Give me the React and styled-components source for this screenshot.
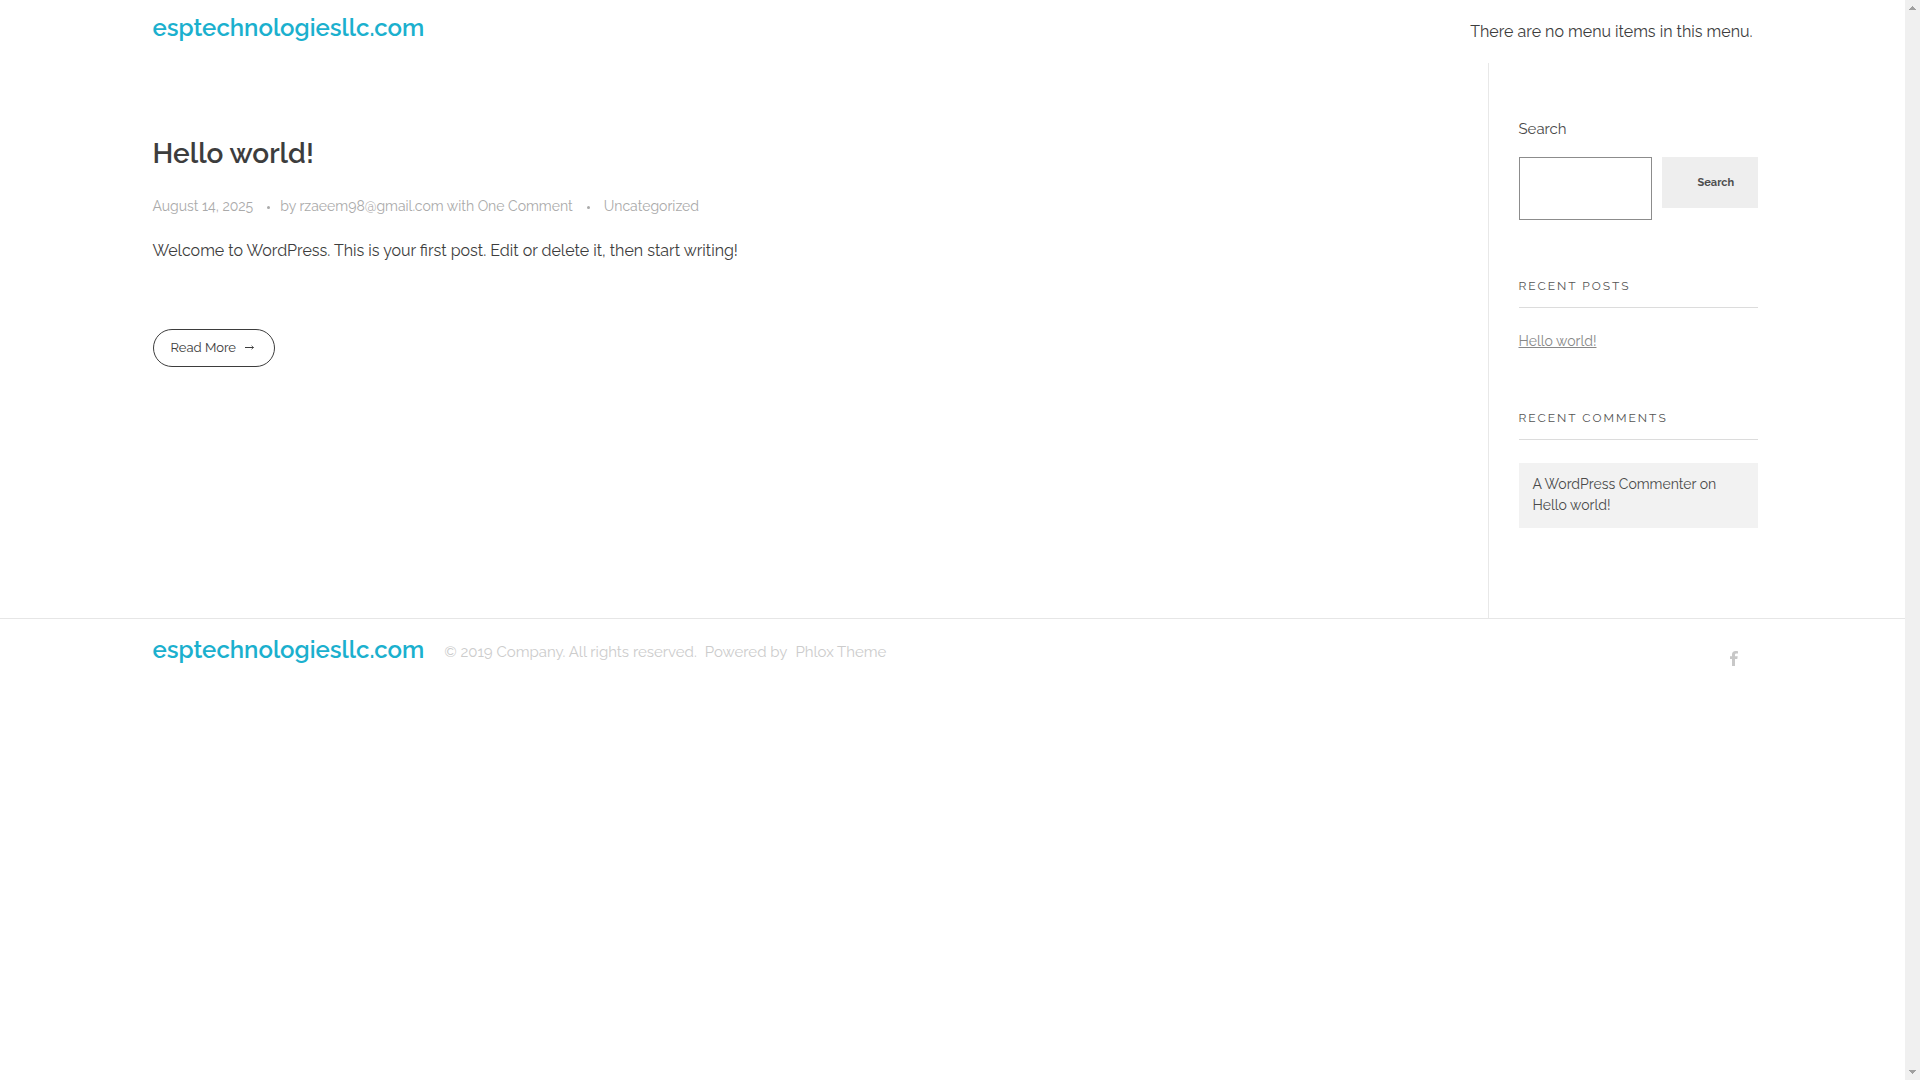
import React from "react";
import styled, { createGlobalStyle } from "styled-components";

const GlobalStyle = createGlobalStyle`
  *, *::before, *::after { box-sizing: border-box; }
  body {
    margin: 0;
    background: #fff;
    color: #3d3d3d;
    font-family: Raleway, Lato, "Open Sans", sans-serif;
    font-size: 16px;
    line-height: 24px;
  }
  a { color: inherit; text-decoration: none; }
  h1, h2, h3, p, ul { margin: 0; padding: 0; font-weight: 400; }
`;

const Window = styled.div`
  display: flex;
  align-items: flex-start;
`;

const Page = styled.div`
  flex: 1;
  min-width: 0;
`;

const Scrollbar = styled.div`
  position: sticky;
  top: 0;
  flex: none;
  display: flex;
  flex-direction: column;
  justify-content: space-between;
  align-items: center;
  width: 15px;
  height: 100vh;
  padding: 6px 0 6px;
  background: #f0f0f0;
`;

const Arrow = styled.svg`
  display: block;
  width: 7px;
  height: 4px;
  fill: #a0a0a0;
`;

const Container = styled.div`
  display: flex;
  align-items: ${(p) => (p.$stretch ? "stretch" : "flex-start")};
  max-width: 1600px;
  margin: 0 auto;
`;

const Header = styled.header`
  height: 63px;
  padding-top: 12px;
`;

const SiteTitle = styled.a`
  color: #1bb0ce;
  font-size: 24px;
  line-height: 32px;
  font-weight: 600;
`;

const MenuNote = styled.p`
  margin-left: auto;
  padding-top: 8px;
`;

const Main = styled.main`
  flex: 1;
  padding-top: 71px;
`;

const PostTitle = styled.h1`
  font-size: 28px;
  line-height: 40px;
  font-weight: 600;
`;

const Meta = styled.div`
  display: flex;
  align-items: center;
  margin-top: 21px;
  color: #aaa;
  font-size: 14px;
  line-height: 22px;
`;

const Dot = styled.span`
  width: 3px;
  height: 3px;
  margin: 3px ${(p) => (p.$wide ? 14 : 10)}px 0 14px;
  border-radius: 50%;
  background: #aaa;
`;

const Excerpt = styled.p`
  margin-top: 22px;
`;

const ReadMore = styled.a`
  display: inline-flex;
  align-items: center;
  gap: 8px;
  height: 38px;
  margin-top: 66px;
  padding: 0 20px 0 17px;
  border: 1px solid #3d3d3d;
  border-radius: 19px;
  font-size: 13px;
  line-height: 20px;
`;

const Sidebar = styled.aside`
  flex: none;
  width: 270px;
  margin-right: -5px;
  padding: 54px 0 90px 30px;
  border-left: 1px solid #e8e8e8;
`;

const SearchForm = styled.form`
  display: grid;
  grid-template-columns: 1fr 96px;
  align-items: start;
  column-gap: 10px;
  row-gap: 16px;
  margin-bottom: 56px;
`;

const SearchLabel = styled.label`
  grid-column: 1 / -1;
  color: #4a4a4a;
  font-size: 15px;
`;

const SearchInput = styled.input`
  width: 100%;
  min-width: 0;
  height: 63px;
  padding: 8px;
  border: 1px solid #8c8c8c;
  border-radius: 0;
  background: #fff;
  font: inherit;
`;

const SearchButton = styled.button`
  height: 51px;
  padding: 0 24px 0 36px;
  border: 0;
  background: #eee;
  color: #4d4d4d;
  font-family: inherit;
  font-size: 11px;
  font-weight: 700;
`;

const Widget = styled.section`
  & + & { margin-top: 56px; }
`;

const WidgetTitle = styled.h2`
  padding-bottom: 11px;
  margin-bottom: 23px;
  border-bottom: 1px solid #dcdcdc;
  color: #555;
  font-size: 12px;
  line-height: 20px;
  letter-spacing: 2px;
  text-transform: uppercase;
`;

const PostLink = styled.a`
  display: block;
  color: #888;
  font-size: 14px;
  line-height: 21px;
  text-decoration: underline;
`;

const Comment = styled.p`
  padding: 11px 14px 12px;
  background: #f2f2f2;
  color: #4a4a4a;
  font-size: 14px;
  line-height: 21px;
`;

const Footer = styled.footer`
  padding: 15px 0;
  border-top: 1px solid #e6e6e6;
`;

const Copyright = styled.p`
  display: flex;
  gap: 8px;
  flex: 1;
  margin-left: 20px;
  padding-top: 6px;
  color: #ccc;
  font-size: 15px;
`;

const Social = styled.a`
  padding: 17px 15px 0 0;
`;

const FacebookMark = styled.svg`
  display: block;
  width: 8px;
  height: 15px;
  fill: #c8c8c8;
`;

export default function App() {
  return (
    <>
      <GlobalStyle />
      <Window>
        <Page>
          <Header>
            <Container>
              <SiteTitle href="#">esptechnologiesllc.com</SiteTitle>
              <MenuNote>There are no menu items in this menu.</MenuNote>
            </Container>
          </Header>
          <Container $stretch>
            <Main>
              <article>
                <PostTitle><a href="#">Hello world!</a></PostTitle>
                <Meta>
                  <a href="#">August 14, 2025</a>
                  <Dot />
                  <span>by <a href="#">rzaeem98@gmail.com</a> with <a href="#">One Comment</a></span>
                  <Dot $wide />
                  <a href="#">Uncategorized</a>
                </Meta>
                <Excerpt>Welcome to WordPress. This is your first post. Edit or delete it, then start writing!</Excerpt>
                <ReadMore href="#">
                  <span>Read More</span>
                  <svg width="10" height="7" viewBox="0 0 10 7" fill="none" stroke="#3d3d3d" aria-hidden="true">
                    <path d="M1 2.500h8.500" />
                    <path d="M7.500 .7l2 1.800-2 1.800" strokeWidth=".8" />
                  </svg>
                </ReadMore>
              </article>
            </Main>
            <Sidebar>
              <SearchForm onSubmit={(e) => e.preventDefault()}>
                <SearchLabel htmlFor="site-search">Search</SearchLabel>
                <SearchInput id="site-search" type="search" />
                <SearchButton type="submit">Search</SearchButton>
              </SearchForm>
              <Widget>
                <WidgetTitle>Recent Posts</WidgetTitle>
                <PostLink href="#">Hello world!</PostLink>
              </Widget>
              <Widget>
                <WidgetTitle>Recent Comments</WidgetTitle>
                <Comment>A WordPress Commenter on <a href="#">Hello world!</a></Comment>
              </Widget>
            </Sidebar>
          </Container>
          <Footer>
            <Container>
              <SiteTitle href="#">esptechnologiesllc.com</SiteTitle>
              <Copyright>
                <span>© 2019 Company. All rights reserved.</span>
                <span>Powered by</span>
                <a href="#">Phlox Theme</a>
              </Copyright>
              <Social href="#" aria-label="Facebook">
                <FacebookMark viewBox="0 0 8 15" aria-hidden="true">
                  <path d="M2 15V8H0V5.3h2V3.6C2 1.200 3.300 0 5.600 0c.9 0 1.900.1 2.400.2v2.300H6.500C5.300 2.500 5 3.100 5 3.900v1.400h2.700L7.300 8H5v7z" />
                </FacebookMark>
              </Social>
            </Container>
          </Footer>
        </Page>
        <Scrollbar aria-hidden="true">
          <Arrow viewBox="0 0 7 4"><path d="M3 0h1v1h1v1h1v1h1v1H0V3h1V2h1V1h1z" /></Arrow>
          <Arrow viewBox="0 0 7 4"><path d="M0 0h7v1H6v1H5v1H4v1H3V3H2V2H1V1H0z" /></Arrow>
        </Scrollbar>
      </Window>
    </>
  );
}
